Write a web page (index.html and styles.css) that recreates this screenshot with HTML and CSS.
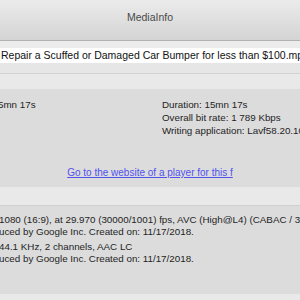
FILE: index.html
```html
<!DOCTYPE html>
<html lang="en">

<head>
    <meta charset="UTF-8">
    <title>MediaInfo</title>
    <link rel="stylesheet" href="styles.css">
</head>

<body>
    <div class="window">
        <div class="titlebar">MediaInfo</div>
        <div class="strip"></div>
        <div class="filename">Repair a Scuffed or Damaged Car Bumper for less than $100.mp4</div>
        <div class="tabs"></div>
        <div class="gap"></div>
        <div class="panel general">
            <div class="cols">
                <div class="col left">
                    <div class="line">5mn 17s</div>
                </div>
                <div class="col right">
                    <div class="line">Duration: 15mn 17s</div>
                    <div class="line">Overall bit rate: 1 789 Kbps</div>
                    <div class="line">Writing application: Lavf58.20.100</div>
                </div>
            </div>
            <a class="player" href="#">Go to the website of a player for this f</a>
        </div>
        <div class="gap tall"></div>
        <div class="panel streams">
            <div class="line">1080 (16:9), at 29.970 (30000/1001) fps, AVC (High@L4) (CABAC / 3 Ref Frames)</div>
            <div class="line">uced by Google Inc. Created on: 11/17/2018.</div>
            <div class="line">44.1 KHz, 2 channels, AAC LC</div>
            <div class="line">uced by Google Inc. Created on: 11/17/2018.</div>
        </div>
        <div class="gap"></div>
    </div>
</body>

</html>
```

FILE: styles.css
```css
html, body {
    margin: 0;
    padding: 0;
    overflow: hidden;
}

body {
    width: 300px;
    height: 300px;
    background: #e8e8e8;
    font-family: "Liberation Sans", Arial, sans-serif;
    color: #1e1e1e;
}

.window {
    width: 300px;
}

.titlebar {
    height: 40px;
    line-height: 34px;
    text-align: center;
    font-size: 10.5px;
    color: #4a4a4a;
    background: linear-gradient(#ebebeb, #d4d4d4);
    border-bottom: 1px solid #b1b1b1;
}

.strip {
    height: 7px;
    background: #ececec;
}

.filename {
    height: 15px;
    line-height: 15px;
    padding-left: 1px;
    background: #fff;
    font-size: 10.5px;
    color: #111;
    white-space: nowrap;
    overflow: hidden;
}

.tabs {
    height: 10px;
    background: #e6e6e6;
    border-bottom: 1px solid #d2d2d2;
}

.gap {
    height: 15px;
    background: #e9e9e9;
}

.gap.tall {
    height: 18px;
    border-bottom: 1px solid #d0d0d0;
}

.panel {
    background: #dcdcdc;
    font-size: 9.8px;
    white-space: nowrap;
    overflow: hidden;
}

.general {
    height: 98px;
    padding-top: 9px;
    box-sizing: border-box;
}

.cols {
    display: flex;
}

.col.left {
    flex: 0 0 164px;
    margin-left: -2px;
}

.line {
    height: 13px;
    line-height: 13px;
}

.player {
    display: block;
    margin-top: 30px;
    text-align: center;
    font-size: 10px;
    color: #5252ee;
    text-decoration: underline;
}

.streams {
    height: 88px;
    padding-top: 8px;
    box-sizing: border-box;
}

.streams .line {
    height: 12px;
    line-height: 12px;
    margin-left: -1px;
}

.streams .line:nth-child(3) {
    margin-top: 3px;
}
```
